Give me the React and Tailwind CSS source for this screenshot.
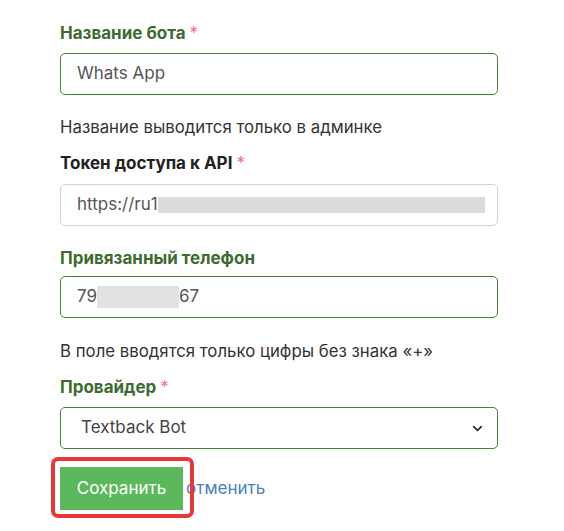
import React from "react";
import { ChevronDown } from "lucide-react";

function Label({ children, required, dark }) {
  return (
    <div className={`h-6 leading-6 text-[17px] font-bold ${dark ? "text-[#222]" : "text-[#3d6b2f]"}`}>
      {children}
      {required && <span className="ml-1 font-normal text-[#f0727a]">*</span>}
    </div>
  );
}

function Field({ children, green = true }) {
  return (
    <div
      className={`flex h-[42px] w-[438px] items-center rounded-[5px] border bg-white pl-4 pr-3 text-[17px] text-[#555] ${
        green ? "border-[#4b7f3c]" : "border-[#d3d3d3]"
      }`}
    >
      {children}
    </div>
  );
}

export default function App() {
  return (
    <div
      className="min-h-[531px] w-[564px] bg-white pl-[60px] pt-[21px]"
      style={{ fontFamily: "Inter, 'Noto Sans', sans-serif" }}
    >
      <Label required>Название бота</Label>
      <div className="mt-2">
        <Field>Whats App</Field>
      </div>
      <div className="mt-5 h-6 leading-6 text-[16.8px] text-[#333]">Название выводится только в админке</div>

      <div className="mt-3">
        <Label required dark>Токен доступа к API</Label>
      </div>
      <div className="mt-[9px]">
        <Field green={false}>
          <span>https://ru1</span>
          <span className="h-[16px] w-[330px] bg-[#dcdcdc]" />
        </Field>
      </div>

      <div className="mt-5">
        <Label>Привязанный телефон</Label>
      </div>
      <div className="mt-[6px]">
        <Field>
          <span>79</span>
          <span className="h-[22px] w-[82px] bg-[#e2e2e2]" />
          <span>67</span>
        </Field>
      </div>
      <div className="mt-[21px] h-6 leading-6 text-[16.8px] text-[#333]">В поле вводятся только цифры без знака «+»</div>

      <div className="mt-3">
        <Label required>Провайдер</Label>
      </div>
      <div className="mt-2">
        <Field>
          <span className="flex-1 pl-1 text-[#444]">Textback Bot</span>
          <ChevronDown size={15} strokeWidth={3} className="text-[#333]" />
        </Field>
      </div>

      <div className="mt-[18px] flex items-center">
        <div className="relative">
          <button className="h-[43px] w-[123px] bg-[#5cb85c] text-[17px] text-white">Сохранить</button>
          <div className="pointer-events-none absolute -left-[9px] -right-[11px] -top-[10px] -bottom-[8px] rounded-[7px] border-4 border-[#e53935]" />
        </div>
        <a className="ml-[3px] text-[17px] text-[#4a7ec0]">отменить</a>
      </div>
    </div>
  );
}
